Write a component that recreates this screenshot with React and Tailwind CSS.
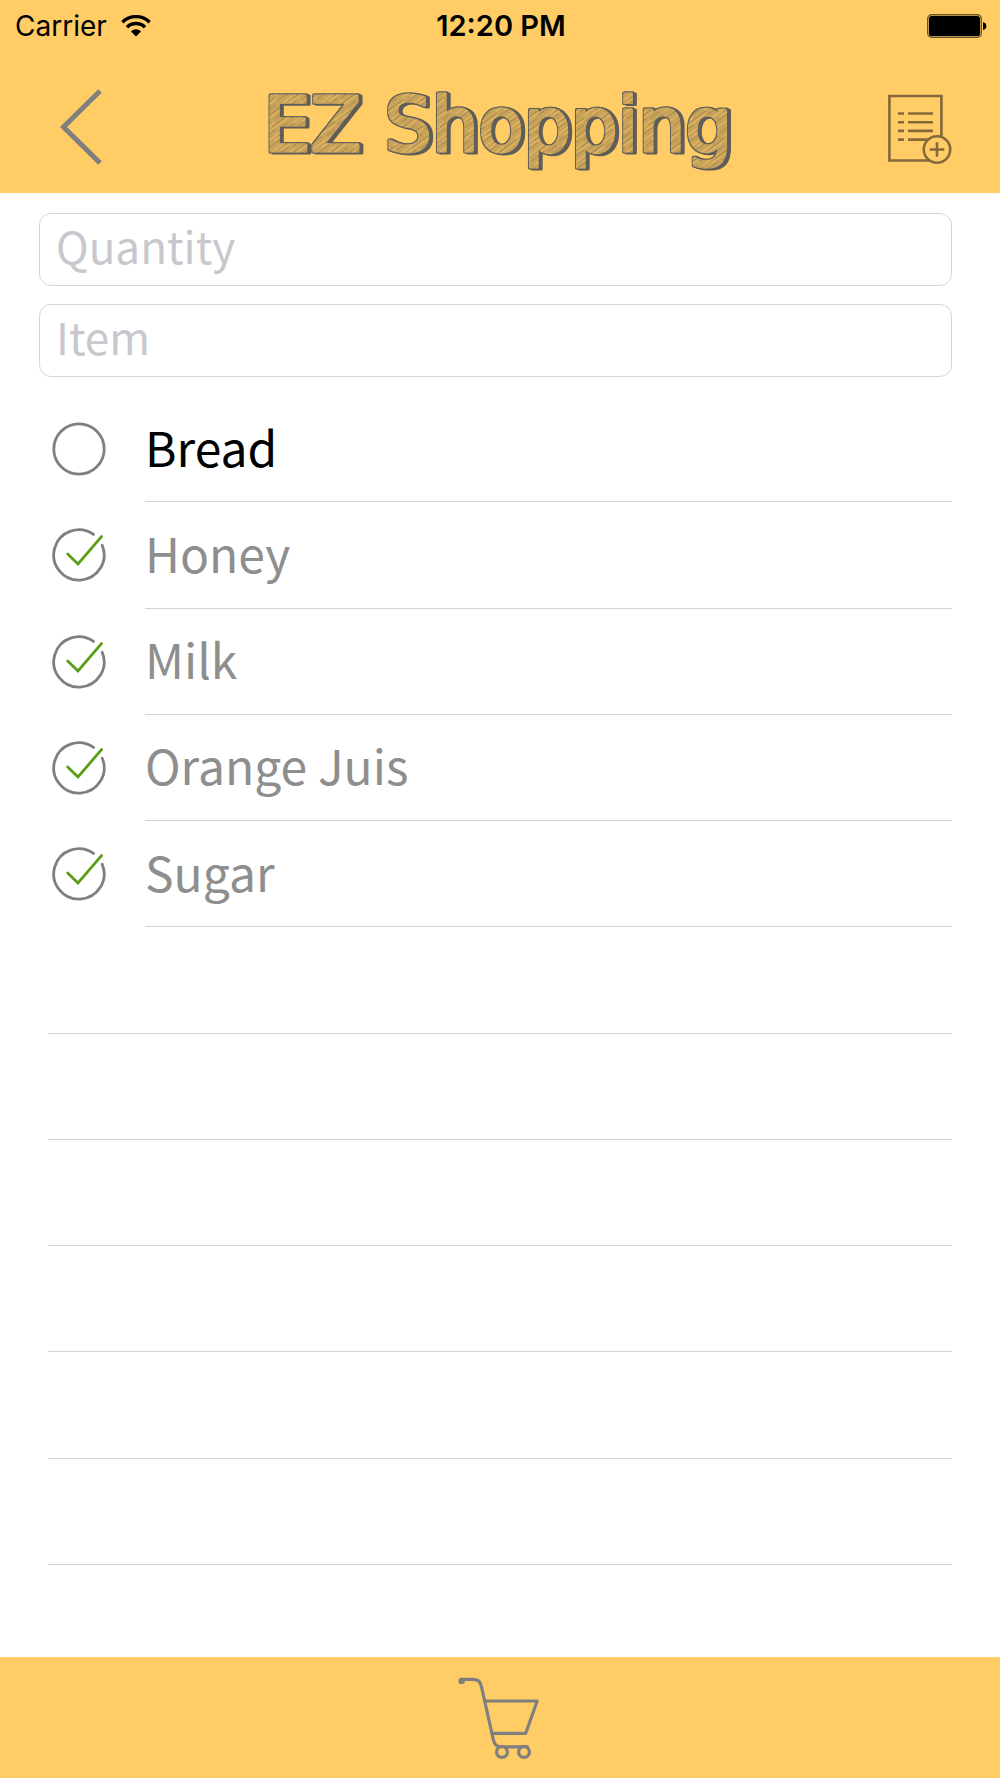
import { useState } from 'react';

const initialItems = [
  { name: 'Bread', done: false },
  { name: 'Honey', done: true },
  { name: 'Milk', done: true },
  { name: 'Orange Juis', done: true },
  { name: 'Sugar', done: true },
];

const EMPTY_ROWS = 6;

const WifiIcon = () => (
  <svg viewBox="0 0 30 22" className="h-[22px] w-[30px]" fill="none" stroke="#000" strokeWidth="3.4">
    <path d="M1.4 7.2a19.4 19.4 0 0 1 27.2 0" />
    <path d="M6 12.2a12.8 12.8 0 0 1 18 0" />
    <path d="M15 21.4l-5-5a7 7 0 0 1 10 0z" fill="#000" stroke="none" />
  </svg>
);

const BatteryIcon = () => (
  <svg viewBox="0 0 60 24" className="h-6 w-[60px]">
    <rect x="0.7" y="0.7" width="53.6" height="22.6" rx="4" fill="none" stroke="#6b5528" strokeWidth="1.4" />
    <rect x="2" y="2" width="51" height="20" rx="2.6" fill="#000" />
    <path d="M56 8q3.4 1 3.4 4t-3.4 4z" fill="#000" />
  </svg>
);

const StatusBar = () => (
  <div className="flex h-[50px] items-center justify-between pl-[15px] pr-[13px] pt-px">
    <div className="flex flex-1 items-center gap-[14px]">
      <span className="text-[28px] leading-8">Carrier</span>
      <WifiIcon />
    </div>
    <span className="whitespace-nowrap text-[29px] font-semibold leading-8">12:20 PM</span>
    <div className="flex flex-1 justify-end">
      <BatteryIcon />
    </div>
  </div>
);

const Logo = () => (
  <h1>
    <svg viewBox="0 0 480 100" className="h-[100px] w-[480px]">
      <defs>
        <pattern id="hatch" width="34" height="11" patternUnits="userSpaceOnUse" patternTransform="rotate(-36)">
          <rect width="34" height="11" fill="#c9a35a" />
          <path d="M0 1.5H20M8 5.5H34" stroke="#e8bb60" strokeWidth="1.2" />
          <path d="M14 3.5H34M0 7.5H16M20 9.5H30" stroke="#a98b54" strokeWidth="1" />
        </pattern>
        <filter id="sketch" x="-5%" y="-5%" width="110%" height="115%">
          <feMorphology in="SourceAlpha" operator="dilate" radius="1" result="fat" />
          <feOffset in="fat" dx="1" dy="0" result="s1" />
          <feOffset in="fat" dx="3" dy="1" result="s2" />
          <feMerge result="shape">
            <feMergeNode in="fat" />
            <feMergeNode in="s1" />
            <feMergeNode in="s2" />
          </feMerge>
          <feFlood floodColor="#5f5d59" />
          <feComposite in2="shape" operator="in" result="shade" />
          <feMerge>
            <feMergeNode in="shade" />
            <feMergeNode in="SourceGraphic" />
          </feMerge>
        </filter>
      </defs>
      <text
        x="238"
        y="74"
        textAnchor="middle"
        fill="url(#hatch)"
        stroke="url(#hatch)"
        strokeWidth="3"
        strokeLinejoin="round"
        filter="url(#sketch)"
        className="font-['DejaVu_Sans',sans-serif] text-[74px]"
      >
        EZ Shopping
      </text>
    </svg>
  </h1>
);

const Header = () => (
  <header className="bg-[#ffcc66]">
    <StatusBar />
    <div className="flex h-[143px] items-center justify-between px-12 pt-2.5">
      <button type="button" aria-label="Back">
        <svg viewBox="0 0 64 80" className="h-20 w-16" fill="none" stroke="#7f7f7f" strokeWidth="5">
          <path d="M52 4L15.500 40L52 76" />
        </svg>
      </button>
      <Logo />
      <button type="button" aria-label="New list">
        <svg viewBox="0 0 64 74" className="h-[74px] w-16" fill="none" stroke="#85693a" strokeWidth="2.6">
          <path d="M1.400 6H53.400V70.500H1.400z" />
          <path d="M10 23.500h6M20 23.500h25M10 32.200h6M20 32.200h25M10 40.900h6M20 40.900h25M10 49.600h6M20 49.600h25" />
          <circle cx="49" cy="59.500" r="13.200" fill="#ffcc66" />
          <path d="M49 52.200v14.600M41.700 59.500h14.600" />
        </svg>
      </button>
    </div>
  </header>
);

const Field = ({ label }) => (
  <input
    type="text"
    aria-label={label}
    placeholder={label}
    className="h-[73px] w-full rounded-xl border border-[#d6d6d6] px-4 pb-2.5 text-[44px] placeholder:text-[#c7c7cd] focus:outline-none"
  />
);

const CheckCircle = ({ done }) => (
  <svg viewBox="0 0 54 54" className="size-[54px]" fill="none" strokeWidth="2.8" strokeLinecap="round">
    {done ? (
      <>
        <path d="M41.500 6.400A25.200 25.200 0 1 0 50.200 17.300" stroke="#7f7f7f" />
        <path d="M15.700 26L26 36L49.500 8.600" stroke="#5a9e16" />
      </>
    ) : (
      <circle cx="27" cy="27" r="25.200" stroke="#7f7f7f" />
    )}
  </svg>
);

const ListItem = ({ item, onToggle }) => (
  <li className="flex">
    <label className="flex flex-1">
      <span className="relative flex w-[97px] items-center pl-1">
        <CheckCircle done={item.done} />
        <input
          type="checkbox"
          checked={item.done}
          onChange={onToggle}
          className="absolute inset-0 cursor-pointer appearance-none"
        />
      </span>
      <span
        className={`flex flex-1 items-center border-b border-[#d3d3d3] pb-1.5 text-[48px] leading-[60px] ${
          item.done ? 'text-[#8e8e8e]' : 'text-black'
        }`}
      >
        {item.name}
      </span>
    </label>
  </li>
);

const CartIcon = () => (
  <svg viewBox="28 36 84 84" className="size-[84px]" fill="none" stroke="#7f7f7f" strokeWidth="3.2">
    <path d="M31.500 39.300H43C49 39.300 50.500 42 52 49L62.500 96C64 104 66 106.800 71 106.800H97.500" strokeLinecap="round" />
    <path d="M54.500 61H107.200L95.700 93.300H62" strokeLinejoin="round" />
    <circle cx="31.600" cy="41" r="3.200" fill="#7f7f7f" stroke="none" />
    <circle cx="72" cy="112" r="5.400" fill="#ffcc66" />
    <circle cx="94" cy="112" r="5.400" fill="#ffcc66" />
  </svg>
);

export default function App() {
  const [items, setItems] = useState(initialItems);

  const toggle = (index) => {
    setItems(items.map((item, i) => (i === index ? { ...item, done: !item.done } : item)));
  };

  return (
    <div className="flex min-h-screen flex-col bg-white font-['Inter',sans-serif] text-black">
      <Header />

      <main className="flex flex-1 flex-col pr-12 font-['Noto_Sans_CJK_SC',sans-serif]">
        <form className="flex flex-col gap-[18px] pl-[39px] pt-5" onSubmit={(e) => e.preventDefault()}>
          <Field label="Quantity" />
          <Field label="Item" />
        </form>

        <ul className="mt-[19px] grid flex-1 auto-rows-fr pb-[92px] pl-12">
          {items.map((item, i) => (
            <ListItem key={item.name} item={item} onToggle={() => toggle(i)} />
          ))}
          {Array.from({ length: EMPTY_ROWS }, (_, i) => (
            <li key={i} aria-hidden="true" className="border-b border-[#d3d3d3]" />
          ))}
        </ul>
      </main>

      <footer className="flex h-[121px] items-center justify-center bg-[#ffcc66]">
        <button type="button" aria-label="Cart">
          <CartIcon />
        </button>
      </footer>
    </div>
  );
}
